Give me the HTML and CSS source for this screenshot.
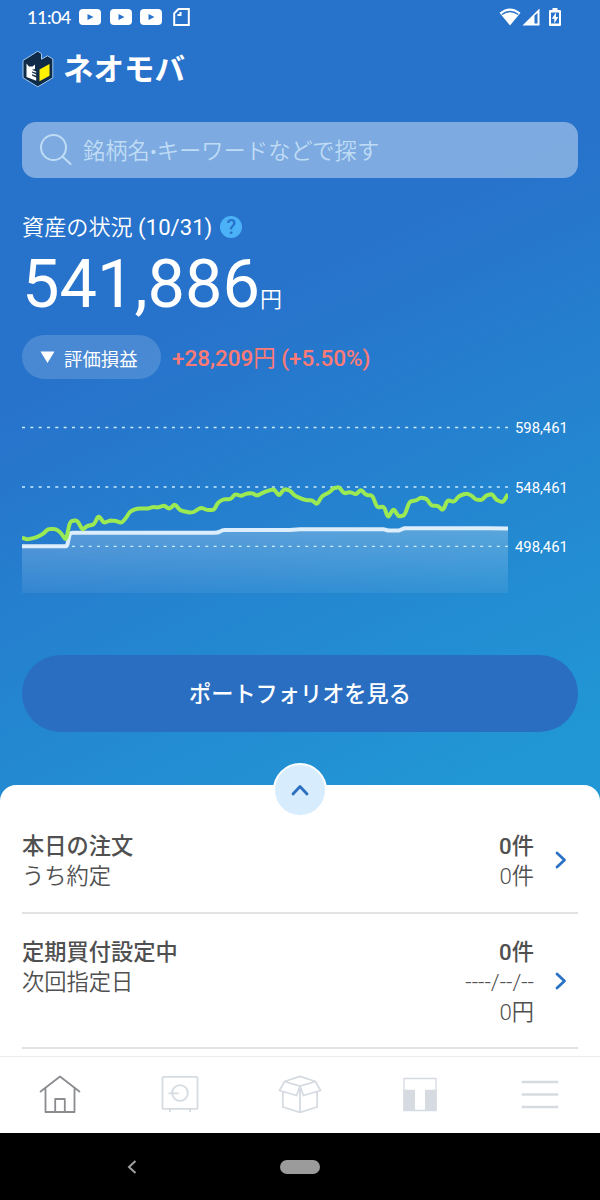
FILE: index.html
```html
<!DOCTYPE html>
<html lang="ja">
  <head>
    <meta charset="UTF-8" />
    <meta name="viewport" content="width=device-width, initial-scale=1.0" />
    <title>ネオモバ</title>
    <link rel="stylesheet" href="styles.css" />
  </head>
  <body>
    <div class="app">
      <main class="home">
        <div class="status-bar">
          <span class="clock">11:04</span>
          <svg class="yt" viewBox="0 0 22 16"><rect width="22" height="16" rx="4" fill="#fff" /><path d="M8.500 5l6 3-6 3z" fill="#2772cb" /></svg>
          <svg class="yt" viewBox="0 0 22 16"><rect width="22" height="16" rx="4" fill="#fff" /><path d="M8.500 5l6 3-6 3z" fill="#2772cb" /></svg>
          <svg class="yt" viewBox="0 0 22 16"><rect width="22" height="16" rx="4" fill="#fff" /><path d="M8.500 5l6 3-6 3z" fill="#2772cb" /></svg>
          <svg class="sim" viewBox="0 0 17 18"><path d="M5.500 1h10.300v16H1.200V5.300zM4.500 7h3V4" fill="none" stroke="#fff" stroke-width="2" /></svg>
          <div class="status-right">
            <svg width="22" height="18" viewBox="0 0 22 18"><path d="M.5 4.800Q11-4 21.500 4.800L11 17.500z" fill="#fff" /><path d="M2.800 6.500Q11 .5 19.200 6.500" fill="none" stroke="#2772cb" stroke-width="1.500" /></svg>
            <svg width="18" height="18" viewBox="0 0 18 18"><path d="M17.500.5v17H.5z" fill="#fff" /><path d="M12.500 7.500l3-2.500v10.500h-3z" fill="#2772cb" /></svg>
            <svg class="battery" width="12" height="18" viewBox="0 0 12 18"><path d="M3.500 0h5v2H11a1 1 0 0 1 1 1v14a1 1 0 0 1-1 1H1a1 1 0 0 1-1-1V3a1 1 0 0 1 1-1h2.500z" fill="#fff" /><path d="M2 4.500h8v11H2z" fill="#2772cb" /><path d="M7 4.500L2.800 10.800h2.500v4.700l4-6.500H7z" fill="#fff" /></svg>
          </div>
        </div>

        <header class="brand">
          <svg class="brand-mark" viewBox="0 0 32 38">
            <path d="M1 10.500L15.800 1.200l3.700 2.500v5.500l6-3.400 5.300 3.200v18.800L15.800 36.800 1 27.800z" fill="#102b48" stroke="#9fc8ef" stroke-width="1" stroke-linejoin="round" />
            <path d="M4.500 13.500L7 16.500h3.500l2.500-2v4.500l-3 .8 4.200 1.700v1.300l-4.200-1.300v1l4.200 2v1.300l-4.200-1.600v1.200l4.200 2v3.400L4.500 27z" fill="#fff" />
            <path d="M17.500 19.500L27.500 14v11.800L17.500 31.300z" fill="#fff200" />
          </svg>
          <span class="brand-name">ネオモバ</span>
        </header>

        <div class="search">
          <svg width="34" height="34" viewBox="0 0 34 34" fill="none" stroke="#bfdcf5" stroke-width="2" stroke-linecap="round"><circle cx="14.500" cy="14.500" r="12.500" /><path d="M23.500 23.500l8 7.500" /></svg>
          <span class="search-text">銘柄名<span class="dot">•</span>キーワードなどで探す</span>
        </div>

        <section class="assets">
          <div class="assets-title">
            <span>資産の状況 <span class="date">(10/31)</span></span>
            <span class="help">?</span>
          </div>
          <div class="amount"><span class="amount-value">541,886</span><span class="amount-unit">円</span></div>
          <div class="profit">
            <div class="profit-type">
              <svg width="15" height="12" viewBox="0 0 15 12"><path d="M.5.500h14L7.500 12z" fill="#fff" /></svg>
              <span class="profit-name">評価損益</span>
            </div>
            <span class="profit-value">+28,209<span class="yen">円</span> (+5.50%)</span>
          </div>
        </section>

        <div class="chart">
          <svg width="486" height="180" viewBox="22 415 486 180">
            <defs>
              <linearGradient id="fill" x1="0" y1="528" x2="0" y2="593" gradientUnits="userSpaceOnUse">
                <stop offset="0" stop-color="#fff" stop-opacity=".25" />
                <stop offset="1" stop-color="#fff" stop-opacity=".06" />
              </linearGradient>
            </defs>
            <path d="M22 546H66L71 533H214L222 530H296L300 529.500H384L388 531H400L404 528H508V593H22z" fill="url(#fill)" />
            <path d="M22 427.500H508M22 487H508M22 546.300H508" stroke="#c9ecff" stroke-width="1.300" stroke-dasharray="3 5.330" fill="none" />
            <path class="cost-line" d="M22 546.300H65Q67 546.300 67.500 544L69.500 535Q70 532.800 73 532.800H214Q218 532.800 220 531.500Q222 530 225 530H290L300 529.300H384L388 530.500H399L404 528.300H490L508 528.600" />
            <path class="value-line" id="value-line" d="" />
          </svg>
          <div class="chart-scale">
            <span>598,461</span>
            <span>548,461</span>
            <span>498,461</span>
          </div>
        </div>

        <div class="portfolio-button">ポートフォリオを見る</div>
      </main>

      <section class="sheet">
        <div class="sheet-toggle">
          <svg width="20" height="14" viewBox="0 0 20 14"><path d="M3 11l7-7.500 7 7.500" fill="none" stroke="#2a6fc0" stroke-width="2.800" stroke-linecap="round" stroke-linejoin="round" /></svg>
        </div>
        <div class="row">
          <div class="row-label">
            <strong>本日の注文</strong>
            <span>うち約定</span>
          </div>
          <div class="row-value">
            <strong>0件</strong>
            <span>0件</span>
          </div>
          <svg class="chevron" viewBox="0 0 12 20"><path d="M2 3l7.500 7L2 17" /></svg>
        </div>
        <div class="row">
          <div class="row-label">
            <strong>定期買付設定中</strong>
            <span>次回指定日</span>
          </div>
          <div class="row-value">
            <strong>0件</strong>
            <span>----/--/--</span>
            <span>0円</span>
          </div>
          <svg class="chevron" viewBox="0 0 12 20"><path d="M2 3l7.500 7L2 17" /></svg>
        </div>
      </section>

      <nav class="tabs">
        <div class="tab active">
          <svg viewBox="0 0 44 40"><path d="M2 18L22 2.500 42 18M7.500 14.500V38h29V14.500M17.200 38V25h9.600v13" /></svg>
        </div>
        <div class="tab">
          <svg viewBox="0 0 44 40"><rect x="4.500" y="2.800" width="35" height="32" rx="1" /><circle cx="22" cy="19" r="7.800" /><path d="M10.500 19.300h10M12 35v3M32 35v3" /></svg>
        </div>
        <div class="tab">
          <svg viewBox="0 0 44 40"><path d="M22 12.200L6.500 7.500 22 2.300 37.500 7.500zM6.500 7.500L1.500 16.500 18.500 21.500 22 12.200l3.500 9.300 17-5L37.500 7.500M4.800 18v15L22 38.300 39.200 33V18M22 13v25" /></svg>
        </div>
        <div class="tab">
          <svg viewBox="0 0 44 40"><path d="M6 4.500h32v32H6z" stroke-width="1.300" /><path d="M5.400 15.700H17V37H5.400zM27 15.700h11.600V37H27z" fill="#d5dbe1" stroke="none" /></svg>
        </div>
        <div class="tab">
          <svg viewBox="0 0 44 40"><path d="M3.700 8h36.500M3.700 20.500h36.500M3.700 33h36.500" stroke-width="2.500" /></svg>
        </div>
      </nav>

      <div class="system-nav">
        <svg width="10" height="16" viewBox="0 0 10 16"><path d="M8.500 2L2 8l6.500 6" fill="none" stroke="#a0a0a0" stroke-width="2" /></svg>
        <span class="home-pill"></span>
        <span></span>
      </div>
    </div>

    <script>
      // asset value over the period, as x,y pairs in chart units
      const points = [
        [22, 537.5], [27, 539.5], [36, 537.5], [43, 534], [48, 529], [56, 529], [61, 533],
        [66, 540.5], [70, 521.5], [77, 520], [82.500, 530], [87, 526], [94, 524.5],
        [98.500, 515.5], [104, 523], [110, 520.5], [116, 521], [121.500, 523], [126, 518],
        [130, 511.5], [137, 508.5], [148, 508.5], [153, 507], [158, 507.5], [164, 505.5],
        [169.500, 509], [175, 504], [180, 510.5], [192, 513], [201, 507.5], [207, 510],
        [214, 510], [218, 502.5], [223, 499.5], [231, 499], [235, 494], [241, 496],
        [246, 493.8], [252, 493], [257, 495.8], [264, 492], [274, 489], [279, 496],
        [284, 489], [290, 490.5], [295, 496], [305, 500], [312.500, 500.5], [317, 504.5],
        [322, 496], [330, 492], [333, 488.500], [339, 487], [344, 493.5], [350, 492],
        [356, 494.5], [361, 489.5], [366, 495], [372.500, 495.5], [377, 507.5],
        [384, 506.5], [388, 518], [393.500, 508.5], [398.500, 516.5], [404.500, 515.5],
        [409.500, 501.5], [416, 500.5], [421, 497.5], [427, 499], [431, 505.5],
        [438, 506], [443, 510.5], [447.500, 500], [454, 502], [459, 496], [466, 493.5],
        [471, 495], [476, 499.8], [482, 500], [486, 495.5], [492, 494], [496.500, 500],
        [503, 502.5], [508, 494],
      ];

      // round the corners by curving through each point
      let d = `M${points[0]}`;
      for (let i = 1; i < points.length - 1; i++) {
        const [px, py] = points[i - 1];
        const [x, y] = points[i];
        const [nx, ny] = points[i + 1];
        const ax = x + (nx - x) * 0.3;
        const ay = y + (ny - y) * 0.3;
        d += `L${x + (px - x) * 0.3},${y + (py - y) * 0.3}Q${x},${y} ${ax},${ay}`;
      }
      d += `L${points[points.length - 1]}`;
      document.getElementById("value-line").setAttribute("d", d);
    </script>
  </body>
</html>
```
FILE: styles.css
```css
* {
  box-sizing: border-box;
}

body {
  margin: 0;
  font-family: Roboto, "Noto Sans CJK JP", sans-serif;
  color: #fff;
}

svg {
  display: block;
  flex: none;
}

.app {
  display: flex;
  flex-direction: column;
  width: 600px;
  height: 1200px;
  overflow: hidden;
  background: linear-gradient(155deg, #2772cb 0%, #2772cb 27%, #2198d5 69%);
}

.home {
  height: 785px;
  flex: none;
  padding: 0 22px;
}

.status-bar {
  display: flex;
  align-items: center;
  height: 33px;
  padding-left: 5px;
}

.clock {
  width: 52px;
  font-family: Lato, Roboto, sans-serif;
  font-size: 18px;
  letter-spacing: -0.5px;
  font-weight: 500;
}

.yt {
  width: 22px;
  height: 16px;
  margin-right: 8.500px;
}

.sim {
  width: 17px;
  height: 18px;
  margin-left: 2px;
}

.status-right {
  display: flex;
  gap: 1px;
  margin-left: auto;
  margin-right: 17px;
}

.battery {
  margin-left: 8px;
}

.brand {
  display: flex;
  align-items: center;
  height: 72px;
}

.brand-mark {
  width: 32px;
  height: 38px;
}

.brand-name {
  margin-left: 9px;
  padding-bottom: 4px;
  font-family: "Noto Sans CJK JP", sans-serif;
  font-size: 30.500px;
  font-weight: 700;
  line-height: 40px;
}

.search {
  display: flex;
  align-items: center;
  gap: 10px;
  height: 56px;
  margin-top: 17px;
  padding-left: 17px;
  border-radius: 14px;
  background: rgba(255, 255, 255, 0.4);
  color: #bfdcf5;
  font-size: 22.300px;
  line-height: 30px;
}

.search-text {
  padding-top: 3px;
  font-weight: 350;
}

.dot {
  font-size: 20px;
  font-weight: 400;
}

.assets-title {
  display: flex;
  align-items: center;
  gap: 8px;
  height: 32px;
  margin-top: 33px;
  font-size: 22.150px;
  font-weight: 350;
  line-height: 32px;
}

.date {
  font-weight: 400;
}

.help {
  width: 22px;
  height: 22px;
  border-radius: 50%;
  background: #4cb2f8;
  color: #2772cb;
  font-size: 20px;
  font-weight: 500;
  line-height: 23px;
  text-align: center;
}

.amount {
  height: 82px;
  line-height: 82px;
  white-space: nowrap;
}

.amount-value {
  font-size: 66.700px;
}

.amount-unit {
  font-size: 22px;
  font-weight: 350;
}

.profit {
  display: flex;
  align-items: center;
  gap: 11px;
  height: 44px;
  margin-top: 10px;
}

.profit-type {
  display: flex;
  align-items: center;
  gap: 9px;
  width: 139px;
  height: 44px;
  padding-left: 18px;
  border-radius: 22px;
  background: rgba(255, 255, 255, 0.16);
  font-size: 18.400px;
}

.profit-name {
  padding-top: 1px;
}

.profit-value {
  padding-top: 3px;
  color: #ff7a74;
  font-size: 22.450px;
  font-weight: 500;
  line-height: 41px;
}

.yen {
  font-weight: 400;
}

.chart {
  display: flex;
  margin-top: 36px;
}

.cost-line,
.value-line {
  fill: none;
  stroke-linejoin: round;
}

.cost-line {
  stroke: #dcedfb;
  stroke-width: 4;
}

.value-line {
  stroke: #9bea54;
  stroke-width: 4;
}

.chart-scale {
  display: flex;
  flex-direction: column;
  gap: 39.500px;
  padding: 3px 0 0 7px;
  font-size: 14.800px;
  line-height: 20px;
}

.portfolio-button {
  height: 77px;
  margin-top: 60px;
  padding-top: 1px;
  border-radius: 39px;
  background: #296ec1;
  font-size: 22.200px;
  font-weight: 500;
  line-height: 77px;
  text-align: center;
}

.sheet {
  position: relative;
  flex: none;
  height: 271px;
  padding: 20px 22px 0;
  border-radius: 16px 16px 0 0;
  background: #fff;
  color: #505050;
}

.sheet-toggle {
  position: absolute;
  top: -22px;
  left: 50%;
  display: flex;
  align-items: center;
  justify-content: center;
  width: 54px;
  height: 54px;
  margin-left: -27px;
  border: 2px solid #fff;
  border-radius: 50%;
  background: #d7ecfc;
}

.row {
  display: flex;
  border-bottom: 2px solid #e3e3e3;
  padding: 24px 11px 20px 0;
  font-size: 22.250px;
  font-weight: 350;
  line-height: 30px;
}

.row:nth-child(2) {
  padding-top: 26px;
  padding-bottom: 21px;
}

.row:nth-child(3) {
  padding-top: 23px;
}

.row-label,
.row-value {
  display: flex;
  flex-direction: column;
}

.row-value {
  margin-left: auto;
  margin-right: 21px;
  text-align: right;
}

.row strong {
  font-weight: 500;
}

.chevron {
  align-self: center;
  width: 12px;
  height: 20px;
  margin-bottom: 3px;
  fill: none;
  stroke: #2a72c4;
  stroke-width: 2.800;
  stroke-linecap: round;
  stroke-linejoin: round;
}

.tabs {
  display: flex;
  flex: none;
  height: 77px;
  padding-bottom: 2px;
  border-top: 1px solid #ececec;
  background: #fff;
}

.tab {
  display: flex;
  flex: 1;
  align-items: center;
  justify-content: center;
}

.tab svg {
  width: 44px;
  height: 40px;
  fill: none;
  stroke: #d5dbe1;
  stroke-width: 1.800;
  stroke-linejoin: round;
}

.tab.active svg {
  stroke: #8a8c8f;
}

.system-nav {
  display: grid;
  grid-template-columns: 10px 40px 10px;
  align-items: center;
  justify-content: center;
  gap: 143px;
  flex: 1;
  background: #000;
}

.home-pill {
  height: 14px;
  border-radius: 7px;
  background: #9b9b9b;
}
```
